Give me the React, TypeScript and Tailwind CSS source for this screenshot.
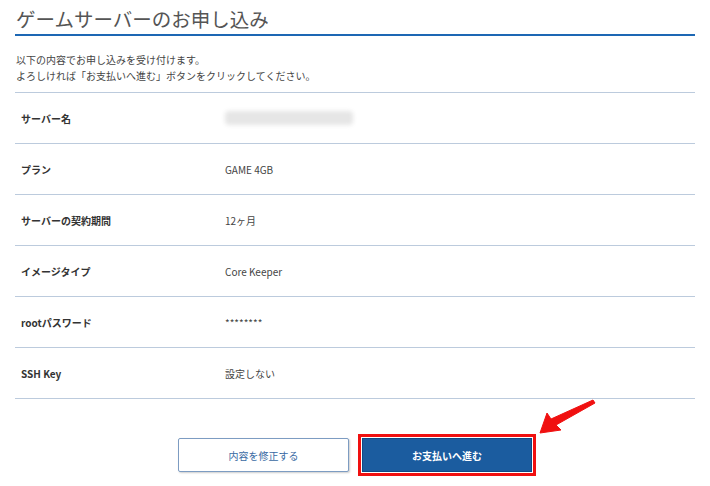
const rows: { label: string; value: string; blur?: boolean }[] = [
  { label: 'サーバー名', value: '', blur: true },
  { label: 'プラン', value: 'GAME 4GB' },
  { label: 'サーバーの契約期間', value: '12ヶ月' },
  { label: 'イメージタイプ', value: 'Core Keeper' },
  { label: 'rootパスワード', value: '********' },
  { label: 'SSH Key', value: '設定しない' },
];

export default function App() {
  return (
    <div
      className="relative w-[710px] h-[486px] bg-white text-[#333] overflow-hidden"
      style={{ fontFamily: '"Noto Sans CJK JP", "Noto Sans", sans-serif' }}
    >
      <div className="px-[15px] pt-[6px]">
        <h1 className="pl-px text-[19.5px] leading-[26px] font-normal text-[#555]">
          ゲームサーバーのお申し込み
        </h1>
        <div className="mt-[2px] h-[2px] bg-[#1d67b4]" />

        <div className="mt-[16px] pl-[1px] text-[10px] leading-[16px] text-[#444]">
          <p>以下の内容でお申し込みを受け付けます。</p>
          <p>よろしければ「お支払いへ進む」ボタンをクリックしてください。</p>
        </div>

        <div className="mt-[8px] border-t border-[#bccbdd]">
          {rows.map((r) => (
            <div key={r.label} className="flex items-center h-[51px] border-b border-[#bccbdd]">
              <div className="w-[210px] pl-[6px] text-[10px] font-bold text-[#333]">{r.label}</div>
              <div className="text-[10px] text-[#444]">
                {r.blur ? (
                  <div className="w-[128px] h-[14px] bg-[#e6e6e6] blur-[2px] rounded-sm" />
                ) : (
                  r.value
                )}
              </div>
            </div>
          ))}
        </div>

        <div className="mt-[35px] flex justify-center items-center gap-[9px] pl-[4px]">
          <button className="w-[171px] h-[34px] border border-[#7d9cc2] rounded-[2px] bg-white text-[10px] text-[#3a6aa3] shadow-[1px_1px_2px_rgba(0,0,0,0.2)]">
            内容を修正する
          </button>
          <div className="border-[3px] border-[#f01010] p-[1px]">
            <button className="w-[170px] h-[34px] bg-[#1b5c9f] border border-[#0f4a86] text-[10px] font-bold text-white">
              お支払いへ進む
            </button>
          </div>
        </div>
      </div>

      <svg className="absolute left-[530px] top-[395px]" width="70" height="45" viewBox="0 0 70 45">
        <polygon
          points="10,38 17,18 21,24 63,5 65,8 26,30 31,35"
          fill="#f01010"
          stroke="#f01010"
          strokeWidth="1"
          strokeLinejoin="round"
        />
      </svg>
    </div>
  );
}
